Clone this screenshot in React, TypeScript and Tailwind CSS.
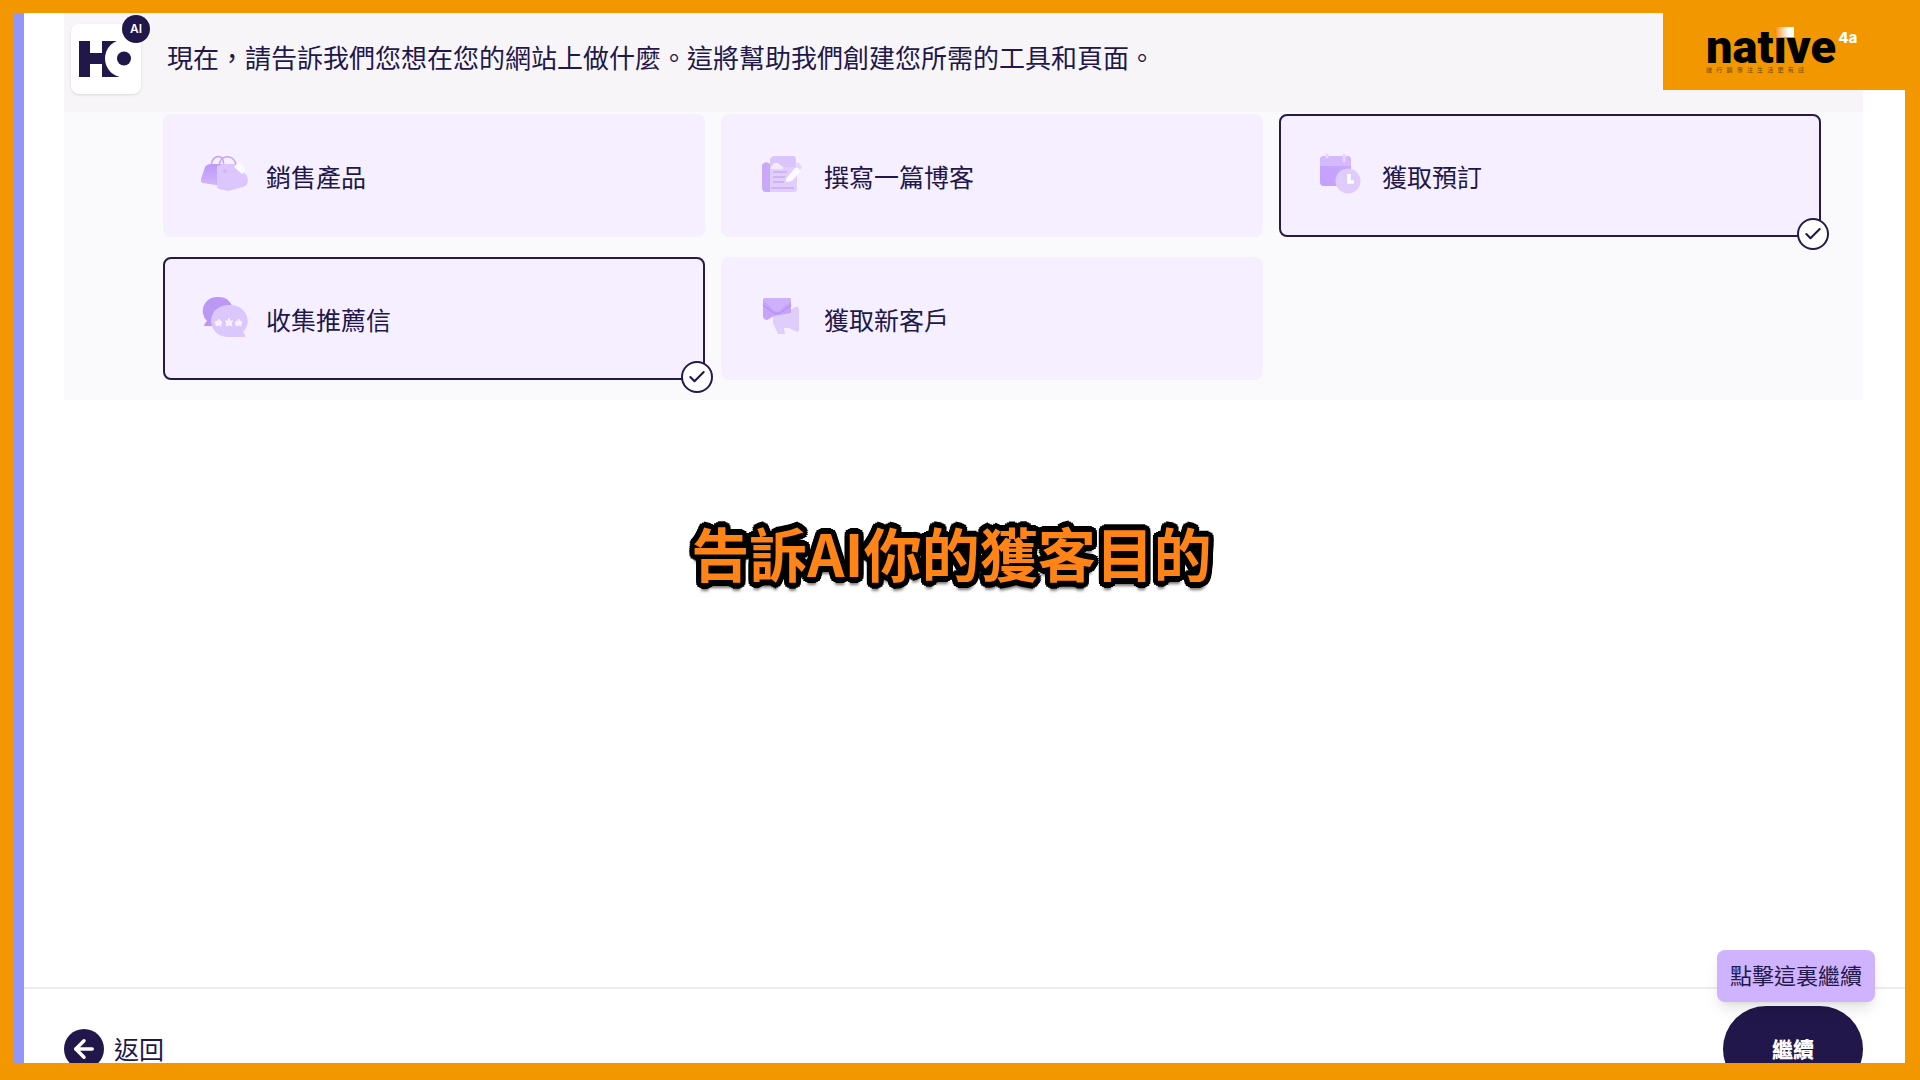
import type { ReactNode } from "react";
import { ArrowLeft, Check } from "lucide-react";

type Goal = {
  id: string;
  label: string;
  icon: ReactNode;
  selected: boolean;
};

function BagsIcon() {
  return (
    <svg viewBox="0 0 48 48" className="h-12 w-12" aria-hidden="true">
      <defs>
        <linearGradient id="bag" x1="0" y1="0" x2="0" y2="1">
          <stop offset="0" stopColor="#bc9af5" />
          <stop offset="1" stopColor="#d2b5fd" />
        </linearGradient>
      </defs>
      <path d="M4 14 Q6 11 10 11 H21 V33 L2 30 Q-1 29 0 26 Z" fill="url(#bag)" />
      <path d="M10 13 C11 3 19 1 22 7 L23 13" fill="none" stroke="#c3a2f8" strokeWidth="1.500" />
      <path d="M16 13 Q17 11 21 11 H36 L46 23 Q49 32 42 34 L27 38 L18 36 Q15 35 16 31 Z" fill="#dcc6fd" />
      <path d="M18 13 C19 1 32 1 35 11" fill="none" stroke="#c3a0f8" strokeWidth="1.500" />
      <circle cx="24" cy="18" r="2" fill="#d0b3fb" />
      <path d="M33 14 L38 9 L44 15 Q45 19 41 21 Z" fill="#fcf9ff" />
    </svg>
  );
}

function BlogIcon() {
  return (
    <svg viewBox="-1 0 48 48" className="h-12 w-12" aria-hidden="true">
      <path d="M11 7 Q11 3 15 3 H32 Q35 3 35 7 L37 15 V36 Q37 39 34 39 H9 V12 Z" fill="#e1cefd" />
      <path d="M10 6 Q12 3 15 3 H33 Q36 3 36 7 V14 H10 Z" fill="#dac4fc" />
      <path d="M2 12 Q5 7 10 11 V39 H6 Q2 39 2 35 Z" fill="#c8a8f8" />
      <path d="M11 14 Q14 9 18 10 L23 14 V16 H11 Z" fill="#f4eaff" />
      <path d="M13 19 H27 M13 24 H25 M13 29 H24 M11 35 H34" stroke="#c9abf9" strokeWidth="1.500" />
      <path d="M26 26 L35 15 Q40 13 40 19 L32 28 L26 29 Z" fill="#fdfbff" />
      <path d="M35 12 L38 9 L42 14 L40 17 Z" fill="#e4d5fb" />
    </svg>
  );
}

function BookingIcon() {
  return (
    <svg viewBox="-2 0 48 48" className="h-12 w-12" aria-hidden="true">
      <defs>
        <linearGradient id="calendar" x1="1" y1="0" x2="0" y2="1">
          <stop offset="0" stopColor="#c9a9fb" />
          <stop offset="1" stopColor="#c39ffb" />
        </linearGradient>
      </defs>
      <rect x="1" y="3" width="31" height="30" rx="4" fill="url(#calendar)" />
      <path d="M1 13 V7 Q1 3 5 3 H28 Q32 3 32 7 V13 Z" fill="#d4b9fd" />
      <path d="M8 2 V4 M25 2 V8" stroke="#e5d6fc" strokeWidth="3" strokeLinecap="round" />
      <circle cx="29" cy="28" r="12.500" fill="#dfccfb" />
      <path d="M30 21 V29 H35" fill="none" stroke="#fff" strokeWidth="3.500" />
    </svg>
  );
}

function ChatIcon() {
  return (
    <svg viewBox="-2 0 48 48" className="h-12 w-12" aria-hidden="true">
      <path d="M15 1 A14 14 0 0 1 30 16 A14 14 0 0 1 15 30 H1 Q1 28 4 25 A14 14 0 0 1 15 1 Z" fill="#bb98f4" />
      <path d="M26 9 A17 16 0 0 0 8 25 A17 16 0 0 0 26 41 H42 Q43 39 40 36 A17 16 0 0 0 26 9 Z" fill="#dcc7fd" />
      <path
        d="M16 23 l1 2 2 1 -1 2 0 2 -2 -1 -3 1 0 -2 -1 -2 3 -1 Z M26 22 l1 3 3 0 -2 2 1 3 -3 -1 -3 1 1 -3 -2 -2 3 0 Z M36 23 l1 2 2 1 -1 2 0 2 -2 -1 -3 1 0 -2 -1 -2 3 -1 Z"
        fill="#f8f0ff"
        stroke="#f8f0ff"
      />
    </svg>
  );
}

function CustomersIcon() {
  return (
    <svg viewBox="-2 0 48 48" className="h-12 w-12" aria-hidden="true">
      <path d="M12 19 L28 15 L34 11 Q38 10 38 14 V34 Q38 37 34 35 L28 32 H23 L24 38 H17 L12 27 Z" fill="#dfcdfb" />
      <path d="M5 2 H28 Q30 2 30 4 V17 L13 20 L6 24 Q2 23 2 20 V4 Q2 2 5 2 Z" fill="#c5a4fa" />
      <path d="M2 4 L14 15 Q16 16 18 15 L30 5 V3 Q30 2 28 2 H4 Z" fill="#ceb0fd" />
      <path d="M2 9 L13 17 Q16 18 19 17 L30 9" fill="none" stroke="#b792f3" strokeWidth="1.500" />
    </svg>
  );
}

const goals: Goal[] = [
  { id: "sell", label: "銷售產品", icon: <BagsIcon />, selected: false },
  { id: "blog", label: "撰寫一篇博客", icon: <BlogIcon />, selected: false },
  { id: "booking", label: "獲取預訂", icon: <BookingIcon />, selected: true },
  { id: "testimonials", label: "收集推薦信", icon: <ChatIcon />, selected: true },
  { id: "customers", label: "獲取新客戶", icon: <CustomersIcon />, selected: false },
];

function GoalCard({ goal }: { goal: Goal }) {
  return (
    <button
      type="button"
      aria-pressed={goal.selected}
      className={`relative flex h-[123px] items-center gap-[17px] rounded-lg border-2 bg-[#f6efff] pt-[3px] pl-9 text-left ${
        goal.selected ? "border-[#261a47]" : "border-transparent"
      }`}
    >
      {goal.icon}
      <span className="text-[25px]">{goal.label}</span>
      {goal.selected && (
        <span className="absolute -right-2.5 -bottom-[15px] flex h-8 w-8 items-center justify-center rounded-full border-2 border-[#261a47] bg-white">
          <Check className="h-5 w-5" strokeWidth={2.5} />
        </span>
      )}
    </button>
  );
}

function AssistantLogo() {
  return (
    <div className="relative flex h-[70px] w-[70px] items-center justify-center rounded-lg bg-white shadow">
      <svg viewBox="0 0 54 38" className="h-[38px] w-[54px]" aria-hidden="true">
        <path d="M0 1 H11 V13 H23 V1 H40 V37 H23 V24 H11 V37 H0 Z" fill="#21174a" />
        <circle cx="45" cy="18.500" r="19" fill="#fff" />
        <circle cx="45" cy="18.500" r="7" fill="#21174a" />
      </svg>
      <span className="absolute -top-[9px] -right-[9px] flex h-7 w-7 items-center justify-center rounded-full bg-[#21174a] font-['Inter',sans-serif] text-xs font-semibold text-white">
        AI
      </span>
    </div>
  );
}

function BrandBadge() {
  return (
    <div className="absolute top-0 right-0 h-[77px] w-[242px] bg-[#f39700] pt-3.5 pl-[43px] text-black">
      <div className="relative flex w-fit items-start gap-0.5">
        <span className="font-['Roboto',sans-serif] text-[47px] leading-[40px] font-black">native</span>
        <span className="absolute top-0 left-[70px] h-2.5 w-[18px] bg-linear-to-r from-[#f39700] to-white to-70%" />
        <span className="font-['Inter',sans-serif] text-[15px] font-extrabold text-white">4a</span>
      </div>
      <div className="flex w-[98px] justify-between text-[6px] leading-[6px] text-[#6b4700]">
        {["讓", "行", "銷", "專", "注", "生", "活", "更", "有", "感"].map((char) => (
          <span key={char}>{char}</span>
        ))}
      </div>
    </div>
  );
}

export default function App() {
  return (
    <div className="relative flex h-screen flex-col overflow-hidden border-t-[13px] border-r-[15px] border-b-[17px] border-l-[14px] border-[#f39700] bg-white font-['Noto_Sans_CJK_TC',sans-serif] text-[#21174a]">
      <div className="flex min-h-0 flex-1 border-l-[10px] border-[#9296fb]">
        <div className="flex min-w-0 flex-1 flex-col">
          <main className="flex flex-1 flex-col pr-[42px] pl-10">
            <section className="bg-[#fafafd]">
              <header className="flex h-[99px] items-center gap-[26px] bg-[#f7f5f8] pb-2 pl-[7px]">
                <AssistantLogo />
                <h1 className="pb-1 text-[26px]">
                  現在，請告訴我們您想在您的網站上做什麼。這將幫助我們創建您所需的工具和頁面。
                </h1>
              </header>
              <div className="grid grid-cols-3 gap-x-4 gap-y-5 pt-0.5 pr-[42px] pb-5 pl-[99px]">
                {goals.map((goal) => (
                  <GoalCard key={goal.id} goal={goal} />
                ))}
              </div>
            </section>
            <p className="pt-[108px] pr-6 text-center text-[58px] leading-[88px] font-bold text-[#ff8418] [text-shadow:5px_0_#000,-5px_0_#000,0_6px_#000,0_-6px_#000,4px_4px_#000,-4px_4px_#000,4px_-4px_#000,-4px_-4px_#000,5px_2px_#000,-5px_2px_#000,5px_-2px_#000,-5px_-2px_#000,2px_5px_#000,-2px_5px_#000,2px_-5px_#000,-2px_-5px_#000,0_8px_3px_#0008]">
              告訴AI你的獲客目的
            </p>
          </main>
          <footer className="flex h-[76px] shrink-0 items-start justify-between border-t-2 border-[#ededf0] pt-[17px] pr-[42px] pl-10">
            <button type="button" className="flex h-[86px] items-center gap-2.5 text-[25px]">
              <span className="flex h-10 w-10 items-center justify-center rounded-full bg-[#21174a] text-white">
                <ArrowLeft className="h-7 w-7" strokeWidth={3} />
              </span>
              返回
            </button>
            <div className="relative">
              <div
                role="tooltip"
                className="absolute -right-3 bottom-full mb-1 flex h-[52px] w-[158px] items-center justify-center rounded-lg bg-[#d0b3ff] pb-1 text-[22px] whitespace-nowrap shadow-lg"
              >
                點擊這裏繼續
              </div>
              <button
                type="button"
                className="h-[86px] w-[140px] rounded-full bg-[#21174a] text-[21px] font-black text-white"
              >
                繼續
              </button>
            </div>
          </footer>
        </div>
      </div>
      <BrandBadge />
    </div>
  );
}
